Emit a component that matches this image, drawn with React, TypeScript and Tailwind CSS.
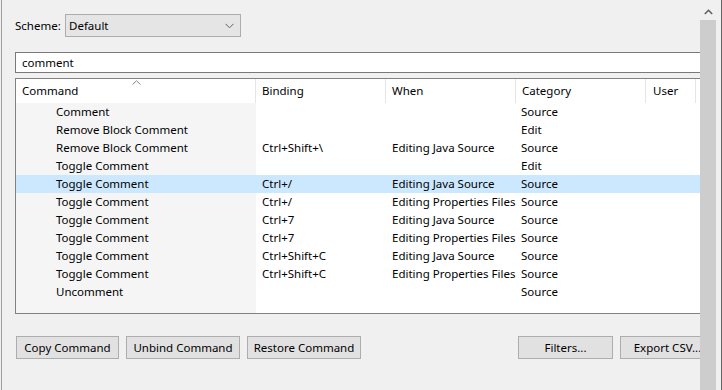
import React from "react";

const rows: { cmd: string; binding: string; when: string; cat: string; sel?: boolean }[] = [
  { cmd: "Comment", binding: "", when: "", cat: "Source" },
  { cmd: "Remove Block Comment", binding: "", when: "", cat: "Edit" },
  { cmd: "Remove Block Comment", binding: "Ctrl+Shift+\\", when: "Editing Java Source", cat: "Source" },
  { cmd: "Toggle Comment", binding: "", when: "", cat: "Edit" },
  { cmd: "Toggle Comment", binding: "Ctrl+/", when: "Editing Java Source", cat: "Source", sel: true },
  { cmd: "Toggle Comment", binding: "Ctrl+/", when: "Editing Properties Files", cat: "Source" },
  { cmd: "Toggle Comment", binding: "Ctrl+7", when: "Editing Java Source", cat: "Source" },
  { cmd: "Toggle Comment", binding: "Ctrl+7", when: "Editing Properties Files", cat: "Source" },
  { cmd: "Toggle Comment", binding: "Ctrl+Shift+C", when: "Editing Java Source", cat: "Source" },
  { cmd: "Toggle Comment", binding: "Ctrl+Shift+C", when: "Editing Properties Files", cat: "Source" },
  { cmd: "Uncomment", binding: "", when: "", cat: "Source" },
];

function Btn({ label, w }: { label: string; w: string }) {
  return (
    <div
      className={`${w} h-[23px] shrink-0 border border-[#adadad] bg-[#e1e1e1] flex items-center justify-center whitespace-nowrap overflow-hidden`}
    >
      {label}
    </div>
  );
}

export default function App() {
  return (
    <div className="w-[722px] h-[390px] overflow-hidden bg-[#f0f0f0] flex font-['Noto_Sans',sans-serif] text-[11.5px] leading-[15px] text-black">
      <div className="w-px shrink-0" />
      <div className="w-px shrink-0 bg-[#a0a0a0]" />
      <div className="w-[698px] shrink-0 overflow-hidden pl-[13px]">
        {/* scheme row */}
        <div className="mt-[14px] h-[23px] flex items-center">
          <span className="w-[50px] shrink-0">Scheme:</span>
          <div className="w-[176px] h-[23px] border border-[#adadad] bg-[#e5e5e5] flex items-center justify-between pl-[3px] pr-[6px]">
            <span>Default</span>
            <svg width="9" height="6" viewBox="0 0 9 6" fill="none">
              <path d="M0.5 0.8 L4.5 4.8 L8.5 0.8" stroke="#606060" strokeWidth="1" />
            </svg>
          </div>
        </div>
        {/* filter input */}
        <div className="mt-[15px] w-[720px] h-[21px] border border-[#7a7a7a] bg-white flex items-center pl-[6px]">
          comment
        </div>
        {/* table */}
        <div className="mt-[5px] w-[720px] h-[236px] border border-[#828282] bg-white flex flex-col overflow-hidden">
          <div className="h-[24px] shrink-0 flex relative">
            <svg className="absolute left-[116px] top-[1px]" width="9" height="5" viewBox="0 0 9 5" fill="none">
              <path d="M0.5 4.5 L4.5 0.8 L8.5 4.5" stroke="#8a8a8a" strokeWidth="1" />
            </svg>
            <div className="w-[240px] shrink-0 pl-[6px] pb-[2px] flex items-center border-r border-[#e5e5e5]">Command</div>
            <div className="w-[130px] shrink-0 pl-[6px] pb-[2px] flex items-center border-r border-[#e5e5e5]">Binding</div>
            <div className="w-[130px] shrink-0 pl-[6px] pb-[2px] flex items-center border-r border-[#e5e5e5]">When</div>
            <div className="w-[130px] shrink-0 pl-[6px] pb-[2px] flex items-center border-r border-[#e5e5e5]">Category</div>
            <div className="w-[50px] shrink-0 pl-[7px] pb-[2px] flex items-center border-r border-[#e5e5e5]">User</div>
          </div>
          <div className="flex-1 relative flex flex-col">
            <div className="absolute left-0 top-0 bottom-0 w-[240px] bg-[#f5f5f5]" />
            {rows.map((r, i) => (
              <div
                key={i}
                className={`relative h-[18px] shrink-0 pb-[2px] flex items-center whitespace-nowrap ${r.sel ? "bg-[#cce8ff]" : ""}`}
              >
                <div className="w-[240px] shrink-0 pl-[40px]">{r.cmd}</div>
                <div className="w-[130px] shrink-0 pl-[6px]">{r.binding}</div>
                <div className="w-[130px] shrink-0 pl-[6px] overflow-hidden">{r.when}</div>
                <div className="w-[130px] shrink-0 pl-[5px]">{r.cat}</div>
              </div>
            ))}
          </div>
        </div>
        {/* buttons */}
        <div className="mt-[22px] flex">
          <div className="ml-px flex gap-[7px]">
            <Btn label="Copy Command" w="w-[103px]" />
            <Btn label="Unbind Command" w="w-[114px]" />
            <Btn label="Restore Command" w="w-[114px]" />
          </div>
          <div className="ml-[157px] flex gap-[7px]">
            <Btn label="Filters..." w="w-[95px]" />
            <Btn label="Export CSV..." w="w-[95px]" />
          </div>
        </div>
        <div className="mt-[27px] flex whitespace-nowrap">
          <span className="w-[68px] pl-[5px]">Name:</span>
          <span>Toggle Comment</span>
        </div>
      </div>
      {/* scrollbar */}
      <div className="w-[16px] shrink-0 pt-[4px] flex flex-col">
        <div className="h-[16px] shrink-0 flex items-center justify-center bg-[#f0f0f0]">
          <svg width="9" height="6" viewBox="0 0 9 6" fill="none">
            <path d="M0.8 5 L4.5 1.3 L8.2 5" stroke="#606060" strokeWidth="1.6" />
          </svg>
        </div>
        <div className="flex-1 bg-[#cdcdcd]" />
      </div>
      <div className="w-[5px] shrink-0" />
      <div className="w-px shrink-0 bg-[#646464]" />
    </div>
  );
}
